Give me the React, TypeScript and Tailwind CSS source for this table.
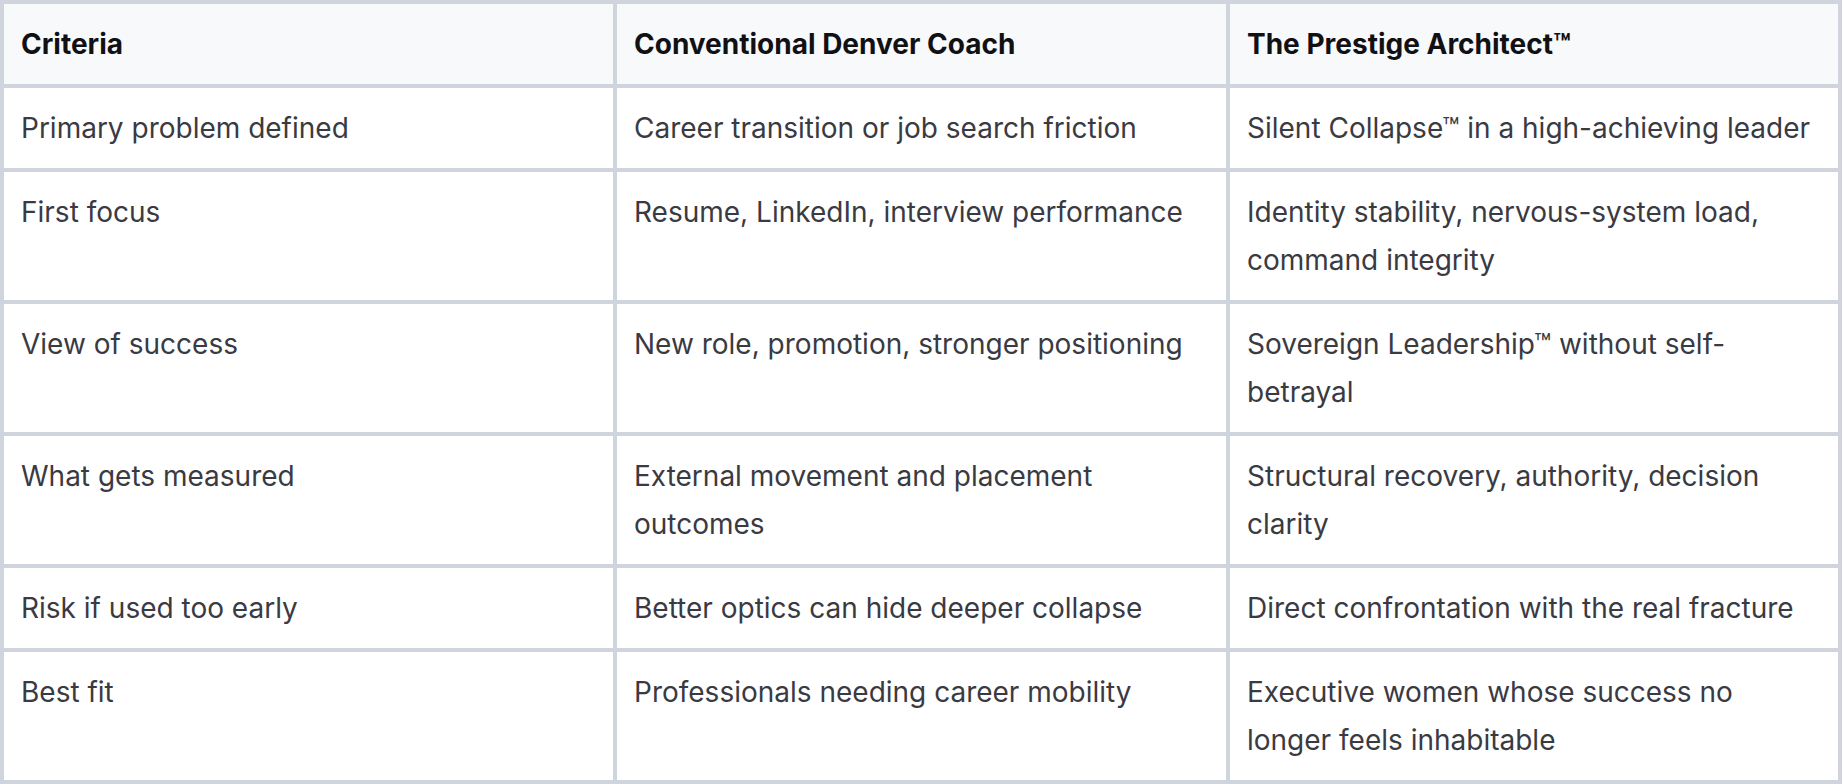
const rows = [
  ["Primary problem defined", "Career transition or job search friction", "Silent Collapse™ in a high-achieving leader"],
  ["First focus", "Resume, LinkedIn, interview performance", "Identity stability, nervous-system load, command integrity"],
  ["View of success", "New role, promotion, stronger positioning", "Sovereign Leadership™ without self-betrayal"],
  ["What gets measured", "External movement and placement outcomes", "Structural recovery, authority, decision clarity"],
  ["Risk if used too early", "Better optics can hide deeper collapse", "Direct confrontation with the real fracture"],
  ["Best fit", "Professionals needing career mobility", "Executive women whose success no longer feels inhabitable"],
];

const headers = ["Criteria", "Conventional Denver Coach", "The Prestige Architect™"];

const App = () => {
  return (
    <div className="w-[1844px] h-[784px] bg-white font-['Inter',sans-serif]">
      <div className="w-[1842px] grid grid-cols-[609px_609px_608px] gap-[4px] p-[4px] bg-[#d0d5dd]">
        {headers.map((h) => (
          <div key={h} className="bg-[#f8f9fb] px-[17px] py-[16px] text-[28px] leading-[48px] font-bold text-[#111114]">
            {h}
          </div>
        ))}
        {rows.map((row) =>
          row.map((cell, i) => (
            <div key={row[0] + i} className="bg-white px-[17px] py-[16px] text-[28px] leading-[48px] text-[#3a3a42]">
              {cell}
            </div>
          ))
        )}
      </div>
    </div>
  );
};

export default App;
